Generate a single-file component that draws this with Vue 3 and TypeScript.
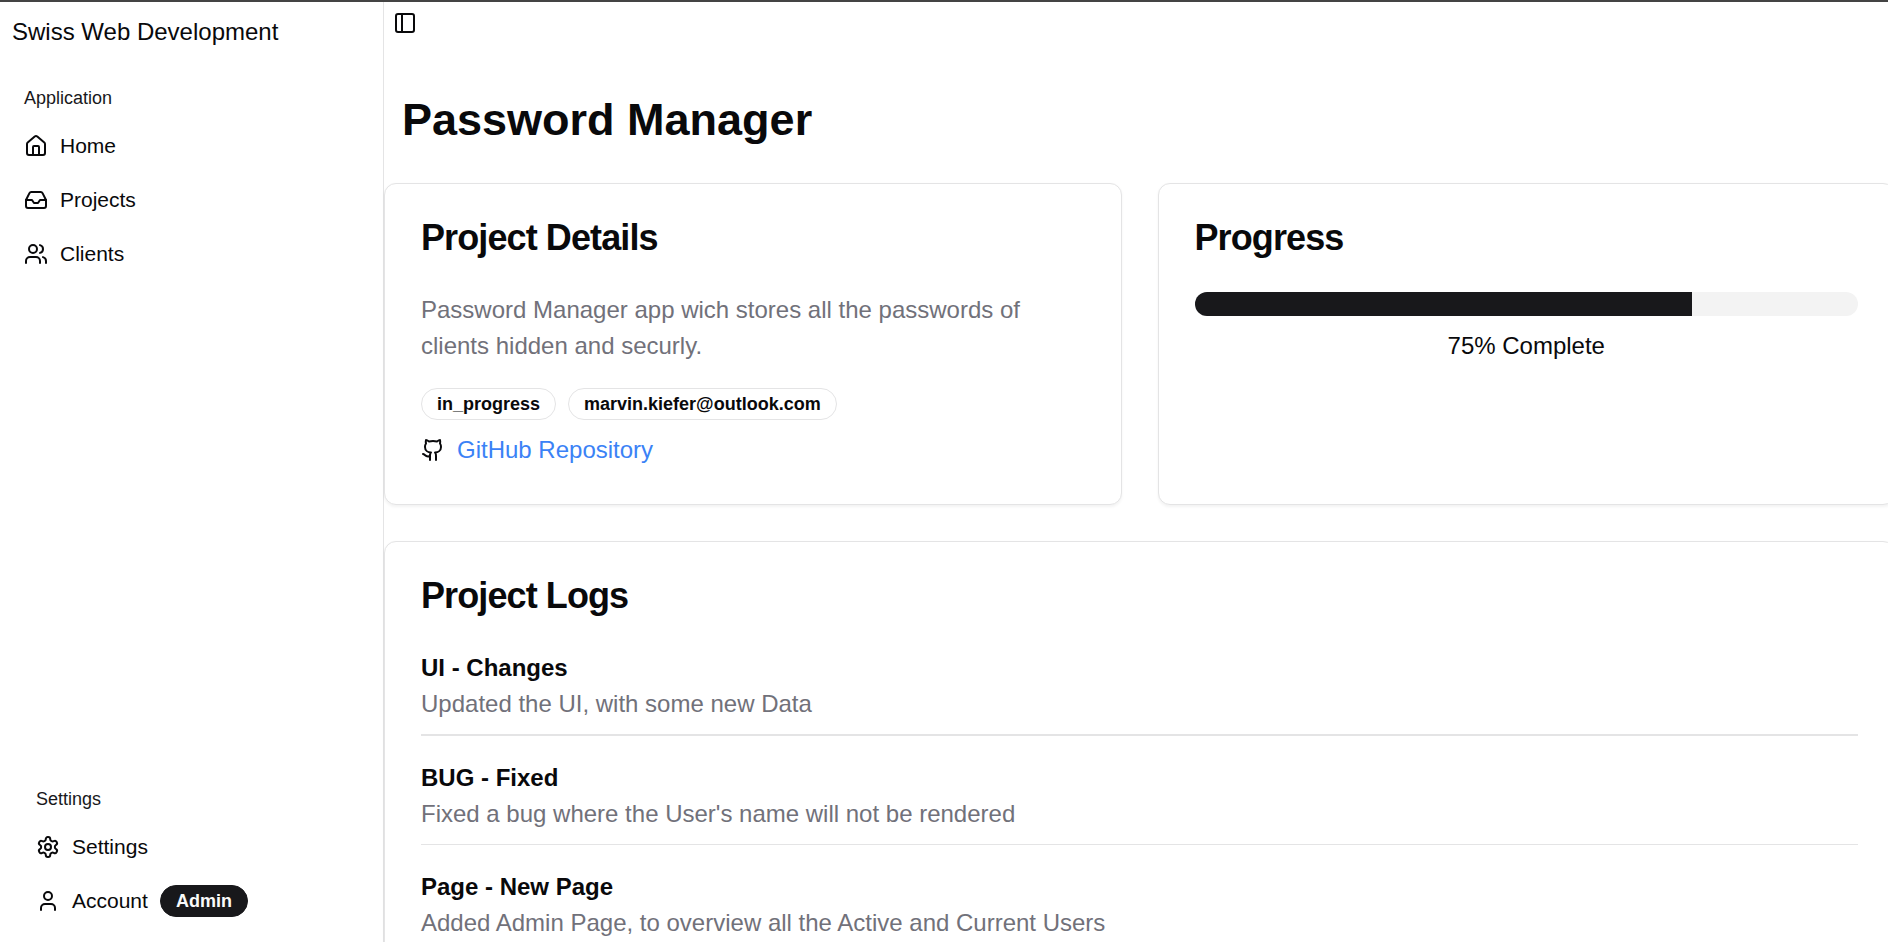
<script setup lang="ts">
interface NavItem {
  label: string
  icon: string[]
  badge?: string
}

interface LogEntry {
  title: string
  text: string
}

const mainNav: NavItem[] = [
  {
    label: 'Home',
    icon: [
      'M15 21v-8a1 1 0 0 0-1-1h-4a1 1 0 0 0-1 1v8',
      'M3 10a2 2 0 0 1 .709-1.528l7-5.999a2 2 0 0 1 2.582 0l7 5.999A2 2 0 0 1 21 10v9a2 2 0 0 1-2 2H5a2 2 0 0 1-2-2z',
    ],
  },
  {
    label: 'Projects',
    icon: [
      'M22 12h-6l-2 3h-4l-2-3H2',
      'M5.45 5.11 2 12v6a2 2 0 0 0 2 2h16a2 2 0 0 0 2-2v-6l-3.45-6.89A2 2 0 0 0 16.76 4H7.24a2 2 0 0 0-1.79 1.11z',
    ],
  },
  {
    label: 'Clients',
    icon: [
      'M16 21v-2a4 4 0 0 0-4-4H6a4 4 0 0 0-4 4v2',
      'M5 7a4 4 0 1 0 8 0a4 4 0 1 0-8 0',
      'M22 21v-2a4 4 0 0 0-3-3.87',
      'M16 3.13a4 4 0 0 1 0 7.75',
    ],
  },
]

const settingsNav: NavItem[] = [
  {
    label: 'Settings',
    icon: [
      'M12.22 2h-.44a2 2 0 0 0-2 2v.18a2 2 0 0 1-1 1.73l-.43.25a2 2 0 0 1-2 0l-.15-.08a2 2 0 0 0-2.73.73l-.22.38a2 2 0 0 0 .73 2.73l.15.1a2 2 0 0 1 1 1.72v.51a2 2 0 0 1-1 1.74l-.15.09a2 2 0 0 0-.73 2.73l.22.38a2 2 0 0 0 2.73.73l.15-.08a2 2 0 0 1 2 0l.43.25a2 2 0 0 1 1 1.73V20a2 2 0 0 0 2 2h.44a2 2 0 0 0 2-2v-.18a2 2 0 0 1 1-1.73l.43-.25a2 2 0 0 1 2 0l.15.08a2 2 0 0 0 2.73-.73l.22-.39a2 2 0 0 0-.73-2.73l-.15-.08a2 2 0 0 1-1-1.74v-.5a2 2 0 0 1 1-1.74l.15-.09a2 2 0 0 0 .73-2.73l-.22-.38a2 2 0 0 0-2.73-.73l-.15.08a2 2 0 0 1-2 0l-.43-.25a2 2 0 0 1-1-1.73V4a2 2 0 0 0-2-2z',
      'M9 12a3 3 0 1 0 6 0a3 3 0 1 0-6 0',
    ],
  },
  {
    label: 'Account',
    icon: ['M19 21v-2a4 4 0 0 0-4-4H9a4 4 0 0 0-4 4v2', 'M8 7a4 4 0 1 0 8 0a4 4 0 1 0-8 0'],
    badge: 'Admin',
  },
]

const tags: string[] = ['in_progress', 'marvin.kiefer@outlook.com']
const progress = 75

const logs: LogEntry[] = [
  { title: 'UI - Changes', text: 'Updated the UI, with some new Data' },
  { title: 'BUG - Fixed', text: "Fixed a bug where the User's name will not be rendered" },
  { title: 'Page - New Page', text: 'Added Admin Page, to overview all the Active and Current Users' },
]
</script>

<template>
  <div class="page">
    <aside class="sidebar">
      <div class="brand">Swiss Web Development</div>
      <nav class="group">
        <div class="group-label">Application</div>
        <ul class="menu">
          <li v-for="item in mainNav" :key="item.label" class="menu-item">
            <svg class="icon" viewBox="0 0 24 24"><path v-for="d in item.icon" :key="d" :d="d" /></svg>
            <span>{{ item.label }}</span>
          </li>
        </ul>
      </nav>
      <div class="sidebar-footer">
        <div class="group-label">Settings</div>
        <ul class="menu">
          <li v-for="item in settingsNav" :key="item.label" class="menu-item">
            <svg class="icon" viewBox="0 0 24 24"><path v-for="d in item.icon" :key="d" :d="d" /></svg>
            <span>{{ item.label }}</span>
            <span v-if="item.badge" class="badge badge-solid">{{ item.badge }}</span>
          </li>
        </ul>
      </div>
    </aside>

    <main class="main">
      <button class="trigger" type="button" aria-label="Toggle Sidebar">
        <svg class="icon" viewBox="0 0 24 24">
          <rect width="18" height="18" x="3" y="3" rx="2" />
          <path d="M9 3v18" />
        </svg>
      </button>
      <h1 class="page-title">Password Manager</h1>

      <div class="cards">
        <section class="card">
          <h2 class="card-title">Project Details</h2>
          <p class="muted">Password Manager app wich stores all the passwords of clients hidden and securly.</p>
          <div class="tags">
            <span v-for="tag in tags" :key="tag" class="badge">{{ tag }}</span>
          </div>
          <div class="repo">
            <svg class="icon" viewBox="0 0 24 24">
              <path d="M15 22v-4a4.8 4.8 0 0 0-1-3.5c3 0 6-2 6-5.5.08-1.25-.27-2.48-1-3.5.28-1.15.28-2.35 0-3.5 0 0-1 0-3 1.5-2.64-.5-5.36-.5-8 0C6 2 5 2 5 2c-.3 1.15-.3 2.35 0 3.5A5.403 5.403 0 0 0 4 9c0 3.5 3 5.5 6 5.5-.39.49-.68 1.05-.85 1.65-.17.6-.22 1.23-.15 1.85v4" />
              <path d="M9 18c-4.51 2-5-2-7-2" />
            </svg>
            <a class="repo-link">GitHub Repository</a>
          </div>
        </section>

        <section class="card">
          <h2 class="card-title">Progress</h2>
          <div class="track"><div class="fill" :style="{ width: progress + '%' }"></div></div>
          <p class="progress-text">{{ progress }}% Complete</p>
        </section>

        <section class="card card-wide">
          <h2 class="card-title">Project Logs</h2>
          <div class="logs">
            <article v-for="log in logs" :key="log.title" class="log">
              <h3 class="log-title">{{ log.title }}</h3>
              <p class="muted">{{ log.text }}</p>
            </article>
          </div>
        </section>
      </div>
    </main>
  </div>
</template>

<style>
body {
  margin: 0;
  background: #fff;
}
</style>

<style scoped>
.page,
.page * {
  box-sizing: border-box;
}

.page {
  display: flex;
  width: 100%;
  height: 942px;
  overflow: hidden;
  border-top: 2px solid #444;
  background: #fff;
  color: #09090b;
  font-family: "Liberation Sans", Arial, sans-serif;
  font-size: 24px;
  line-height: 36px;
}

h1,
h2,
h3,
p,
ul {
  margin: 0;
  padding: 0;
}

.icon {
  flex: none;
  display: block;
  width: 24px;
  height: 24px;
  fill: none;
  stroke: currentColor;
  stroke-width: 2;
  stroke-linecap: round;
  stroke-linejoin: round;
}

.sidebar {
  flex: none;
  display: flex;
  flex-direction: column;
  width: 384px;
  border-right: 1px solid #e4e4e5;
}

.brand {
  padding: 12px;
}

.group {
  padding: 12px;
}

.group-label {
  display: flex;
  align-items: center;
  height: 48px;
  padding: 0 12px;
  font-size: 18px;
  line-height: 24px;
  color: #18181b;
}

.menu {
  display: flex;
  flex-direction: column;
  gap: 6px;
  list-style: none;
}

.menu-item {
  display: flex;
  align-items: center;
  gap: 12px;
  height: 48px;
  padding: 0 12px;
  font-size: 21px;
  line-height: 30px;
}

.sidebar-footer {
  margin-top: auto;
  padding: 12px 24px 17px;
}

.badge {
  display: inline-flex;
  align-items: center;
  padding: 3px 15px;
  border: 1px solid #e4e4e5;
  border-radius: 999px;
  font-size: 18px;
  line-height: 24px;
  font-weight: 700;
}

.badge-solid {
  border-color: #18181b;
  background: #18181b;
  color: #fafafa;
}

.main {
  flex: 1;
  min-width: 0;
}

.trigger {
  display: flex;
  align-items: center;
  justify-content: center;
  width: 42px;
  height: 42px;
  padding: 0;
  border: 0;
  background: none;
  color: inherit;
}

.page-title {
  margin: 49px 18px 36px;
  font-size: 45px;
  line-height: 54px;
  font-weight: 700;
}

.cards {
  display: grid;
  grid-template-columns: 1fr 1fr;
  gap: 36px;
  width: 1511px;
}

.card {
  padding: 36px;
  border: 1px solid #e4e4e5;
  border-radius: 12px;
  background: #fff;
  box-shadow: 0 1.5px 3px rgba(0, 0, 0, 0.05);
}

.card-wide {
  grid-column: 1 / -1;
}

.card-title {
  margin-bottom: 36px;
  font-size: 36px;
  line-height: 36px;
  font-weight: 700;
  letter-spacing: -0.025em;
}

.muted {
  color: #71717a;
}

.tags {
  display: flex;
  gap: 12px;
  margin: 24px 0 12px;
}

.repo {
  display: flex;
  align-items: center;
  gap: 12px;
}

.repo-link {
  color: #3b82f6;
}

.track {
  height: 24px;
  overflow: hidden;
  border-radius: 12px;
  background: #f3f3f3;
}

.fill {
  height: 100%;
  background: #18181b;
}

.progress-text {
  margin-top: 12px;
  text-align: center;
}

.logs {
  display: flex;
  flex-direction: column;
  gap: 24px;
}

.log {
  padding-bottom: 12px;
  border-bottom: 1px solid #e4e4e5;
}

.log:first-child {
  border-bottom-width: 2px;
}

.log-title {
  font-size: 24px;
  line-height: 36px;
  font-weight: 700;
}
</style>
